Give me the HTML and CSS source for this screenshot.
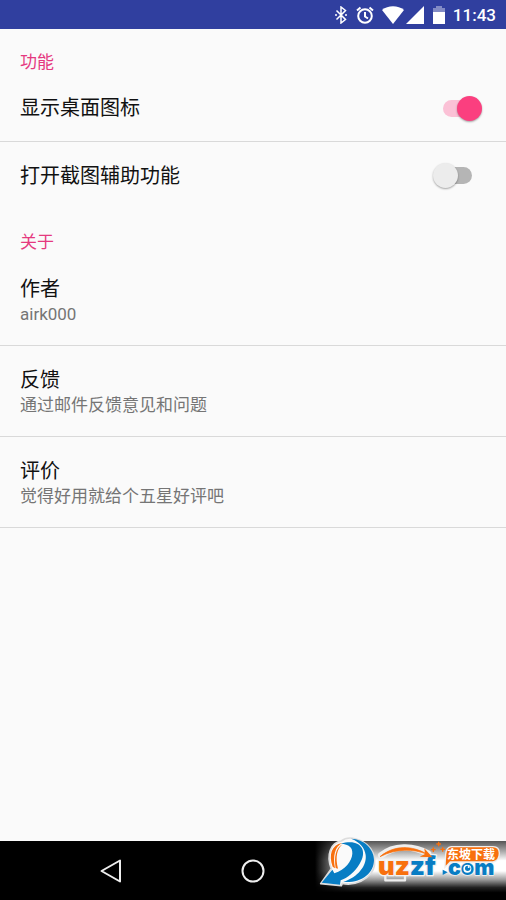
FILE: index.html
```html
<!DOCTYPE html>
<html lang="zh-CN">
<head>
<meta charset="utf-8">
<meta name="viewport" content="width=device-width, initial-scale=1">
<title>设置</title>
<link rel="stylesheet" href="styles.css">
</head>
<body>
<header class="status-bar">
  <svg class="icon-bluetooth" viewBox="0 0 12 18" aria-hidden="true"><path d="M1.500 4.500l9 9L6 17V1l4.500 3.500-9 9"/><path d="M0 9h2M10 9h2"/></svg>
  <svg class="icon-alarm" viewBox="0 0 18 18" aria-hidden="true"><circle cx="9" cy="10" r="6.800"/><path d="M9 6v4.500l3 2M1 4.500L4.500 1.500M17 4.500L13.500 1.500"/></svg>
  <svg class="icon-wifi" viewBox="0 0 22 18" aria-hidden="true"><path d="M0 4C6-1 16-1 22 4L11 18z"/></svg>
  <svg class="icon-signal" viewBox="0 0 18 18" aria-hidden="true"><path d="M18 0v18H0z"/></svg>
  <svg class="icon-battery" viewBox="0 0 12 18" aria-hidden="true"><path class="battery-empty" d="M0 2h3V0h6v2h3v4H0z"/><path d="M0 6h12v12H0z"/></svg>
  <time class="clock">11:43</time>
</header>
<main class="settings">
  <section>
    <h2 class="heading">功能</h2>
    <div class="row toggle-row divided">
      <label class="title" for="show-icon">显示桌面图标</label>
      <input class="switch" id="show-icon" type="checkbox" role="switch" checked>
    </div>
    <div class="row toggle-row">
      <label class="title" for="screenshot">打开截图辅助功能</label>
      <input class="switch" id="screenshot" type="checkbox" role="switch">
    </div>
  </section>
  <section>
    <h2 class="heading">关于</h2>
    <div class="row info-row divided">
      <span class="title">作者</span>
      <span class="summary">airk000</span>
    </div>
    <a class="row info-row divided" href="#feedback">
      <span class="title">反馈</span>
      <span class="summary">通过邮件反馈意见和问题</span>
    </a>
    <a class="row info-row divided" href="#rate">
      <span class="title">评价</span>
      <span class="summary">觉得好用就给个五星好评吧</span>
    </a>
  </section>
</main>
<nav class="nav-bar">
  <button class="nav-button" type="button" aria-label="返回"><svg class="nav-icon" viewBox="0 0 24 24"><path d="M21 1.500v21L2.500 12z"/></svg></button>
  <button class="nav-button" type="button" aria-label="主屏幕"><svg class="nav-icon" viewBox="0 0 24 24"><circle cx="12" cy="12" r="10.500"/></svg></button>
  <button class="nav-button" type="button" aria-label="最近任务"><svg class="nav-icon" viewBox="0 0 24 24"><rect x="3" y="3" width="18" height="18" rx="1"/></svg></button>
</nav>
<svg class="watermark" viewBox="0 0 618 240" role="img" aria-label="东坡下载 uzzf.com">
  <defs>
    <linearGradient id="glow" x1="0" y1="0" x2="0" y2="1">
      <stop offset="0" stop-color="#555"/><stop offset=".2" stop-color="#aaa"/><stop offset=".38" stop-color="#fff"/><stop offset=".58" stop-color="#fff"/><stop offset=".75" stop-color="#999"/><stop offset=".9" stop-color="#222"/><stop offset="1" stop-color="#000"/>
    </linearGradient>
    <linearGradient id="fade"><stop offset="0" stop-color="#000"/><stop offset=".2" stop-color="#fff"/></linearGradient>
    <mask id="edge"><rect x="45" y="63" width="573" height="160" fill="url(#fade)"/></mask>
  </defs>
  <rect x="45" y="63" width="573" height="155" fill="url(#glow)" mask="url(#edge)"/>
  <g>
    <path class="halo" d="M94 146C78 105 92 67 124 63C142 48 164 53 188 65C230 88 237 145 200 173C180 189 151 196 127 190L124 197L62 191L94 146z"/>
    <path class="blue" d="M122 71C178 54 206 88 179 131C165 156 142 174 122 181L120 194L65 188L97 149L103 160C137 148 155 124 157 101C158 82 148 73 122 71z"/>
    <path class="blue" d="M153 56C193 57 222 88 222 120C222 160 184 190 130 186C174 171 201 137 197 105C194 83 180 66 153 56z"/>
    <path class="orange" d="M126 69C105 80 98 108 105 145L98 140C85 105 95 74 126 69z"/>
    <path class="orange" d="M128 73C111 85 105 113 114 146L107 144C102 111 107 83 128 73z"/>
  </g>
  <path class="arc-halo" d="M244 106C280 76 340 75 384 101"/>
  <path class="tray" d="M256 168V181H315V168"/>
  <path class="badge" d="M454 82H579Q596 82 596 100Q596 120 579 124H450L437 137L439 103Q440 84 454 82z"/>
  <text class="brand" x="234" y="165"><tspan class="orange">uz</tspan><tspan class="blue">zf</tspan></text>
  <text class="brand brand-suffix blue" x="444" y="165">com</text>
  <path class="blue" d="M428 149L443 157L428 165z"/>
  <path class="arc" d="M240 110C282 74 338 76 382 103C340 86 288 85 240 110z"/>
  <path class="orange" d="M373 85L397 112L359 110L375 102z"/>
  <path class="spark" d="M416 65v14M409 72h14M400 82v14M393 89h14M428 81v14M421 88h14"/>
  <text class="badge-text" x="441" y="117">东坡下载</text>
  <circle class="eye" cx="502" cy="146" r="12"/>
  <circle class="blue" cx="503" cy="145" r="8"/>
  <circle class="eye" cx="506" cy="141" r="3"/>
</svg>
</body>
</html>
```
FILE: styles.css
```css
* { box-sizing: border-box; }

body {
  margin: 0;
  min-height: 100vh;
  display: flex;
  flex-direction: column;
  position: relative;
  background: #fafafa;
  color: #111;
  font-family: Roboto, "Noto Sans CJK SC", sans-serif;
}

.status-bar {
  display: flex;
  align-items: center;
  justify-content: flex-end;
  height: 29px;
  padding: 1px 10px 0 0;
  background: #303f9f;
  color: #fff;
}

.status-bar svg { height: 18px; fill: #fff; }
.status-bar .icon-bluetooth,
.status-bar .icon-alarm { fill: none; stroke: #fff; stroke-width: 2; }
.status-bar .icon-bluetooth { width: 12px; margin-right: 9px; stroke-width: 1.5; }
.icon-alarm { width: 18px; margin-right: 8px; }
.icon-wifi { width: 22px; margin-right: 2px; }
.icon-signal { width: 18px; margin-right: 9px; }
.icon-battery { width: 12px; margin-right: 8px; }
.battery-empty { opacity: .4; }
.clock { font-size: 17px; line-height: 24px; font-weight: 500; }

.settings { flex: 1; }

.heading {
  margin: 0;
  padding: 21px 20px 1px;
  color: #e5397f;
  font-size: 17px;
  line-height: 24px;
  font-weight: 400;
}

.row { display: flex; color: inherit; text-decoration: none; }
.divided { border-bottom: 1px solid #d9d9d9; }

.toggle-row {
  align-items: center;
  justify-content: space-between;
  min-height: 67px;
  padding: 0 24px 0 20px;
}

.info-row { flex-direction: column; padding: 21px 20px 19px; }
.title { font-size: 20px; line-height: 26px; }
.summary { color: #757575; font-size: 17px; line-height: 24px; }

.switch {
  appearance: none;
  display: flex;
  align-items: center;
  position: relative;
  width: 49px;
  height: 25px;
  margin: 0;
  padding: 0 10px;
}

.switch::before {
  content: "";
  flex: 1;
  height: 17px;
  border-radius: 9px;
  background: #b5b5b5;
}

.switch::after {
  content: "";
  position: absolute;
  left: 0;
  top: 0;
  width: 25px;
  height: 25px;
  border-radius: 50%;
  background: #ececec;
  box-shadow: 0 1px 2px rgba(0, 0, 0, .35);
}

.switch:checked::before { background: #fbc1d6; }
.switch:checked::after { left: auto; right: 0; background: #fb3f7f; }

.nav-bar {
  display: flex;
  justify-content: center;
  height: 59px;
  background: #000;
}

.nav-button {
  display: grid;
  place-items: center;
  width: 28%;
  padding: 0;
  border: 0;
  background: none;
}

.nav-icon {
  width: 24px;
  height: 24px;
  fill: none;
  stroke: #eee;
  stroke-width: 2;
  stroke-linejoin: round;
}

.watermark {
  position: absolute;
  right: 0;
  bottom: 0;
  width: 206px;
  height: 80px;
}

.blue { fill: #087dc4; }
.orange { fill: #f8700e; }
.halo { fill: #fafafa; stroke: #ddd; stroke-width: 5; stroke-linejoin: round; }
.arc-halo { fill: none; stroke: #eee; stroke-width: 20; stroke-linecap: round; }
.arc { fill: #f8700e; stroke: #f8700e; stroke-width: 2; }
.tray { fill: none; stroke: #eee; stroke-width: 7; stroke-linejoin: round; }
.brand {
  font: 900 77px Inter, sans-serif;
  stroke: #f2f2f2;
  stroke-width: 8;
  stroke-linejoin: round;
  paint-order: stroke;
}
.brand-suffix { font-size: 64px; stroke-width: 4; }
.spark { fill: none; stroke: #f8700e; stroke-width: 4; }
.badge { fill: #f8700e; stroke: #eee; stroke-width: 8; paint-order: stroke; }
.badge-text { fill: #fff; font: 700 36px "Noto Sans CJK SC", sans-serif; }
.eye { fill: #fff; }
```
